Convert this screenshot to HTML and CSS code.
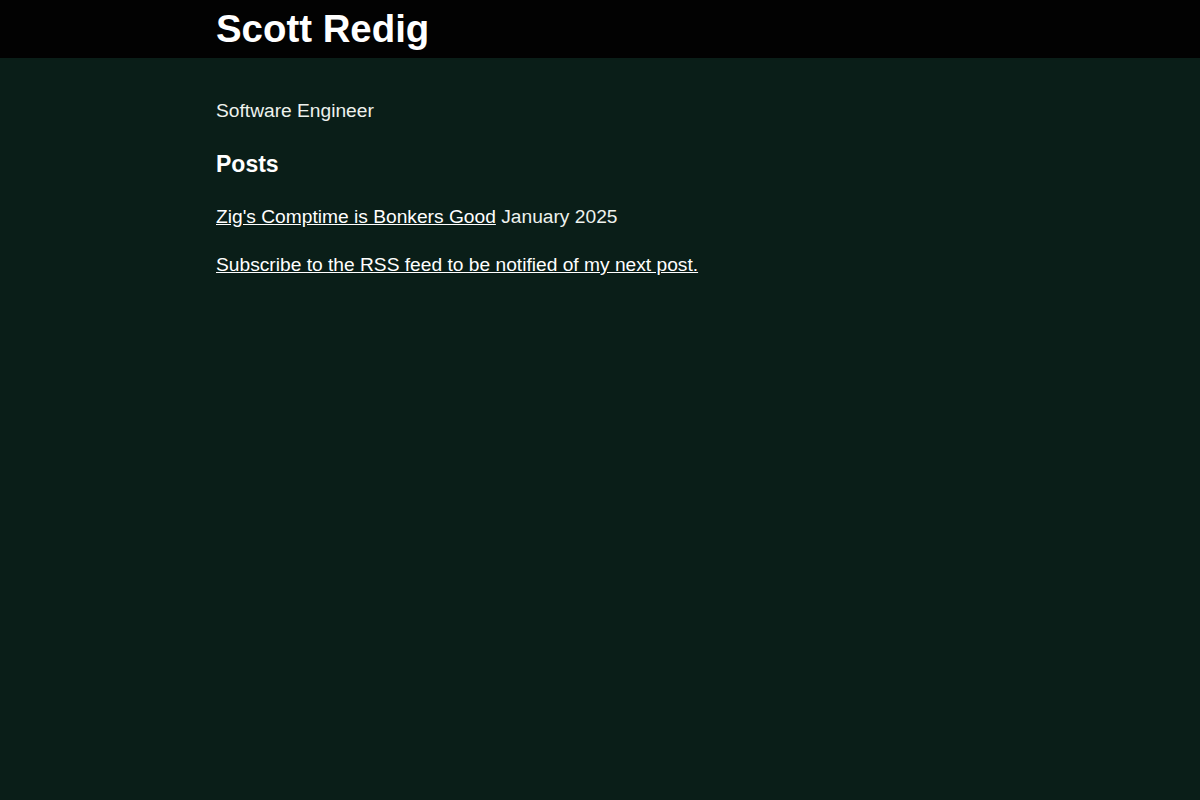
FILE: index.html
```html
<!DOCTYPE html>
<html lang="en">
<head>
	<meta charset="utf-8" />
	<meta name="viewport" content="width=device-width, initial-scale=1.0" />
	<title>Scott Redig</title>
	<link rel="stylesheet" href="styles.css">
</head>
<body>
	<header>
		<div class="wrap">
			<h1>Scott Redig</h1>
		</div>
	</header>
	<main class="wrap">
		<p>Software Engineer</p>
		<h2>Posts</h2>
		<p><a href="#">Zig's Comptime is Bonkers Good</a> January 2025</p>
		<p><a href="#">Subscribe to the RSS feed to be notified of my next post.</a></p>
	</main>
</body>
</html>
```

FILE: styles.css
```css
body {
	font: 19.2px/1.5 "Liberation Sans", Arial, sans-serif;
	color: #eef2ee;
	background: #0a1e18;
	margin: 0;
}
.wrap {
	max-width: 768px;
	margin: 0 auto;
}
header {
	background: #020202;
}
h1 {
	font-size: 2em;
	line-height: 1.5;
	margin: 0;
	color: #fff;
}
main {
	padding-top: 20px;
}
h2 {
	font-size: 23px;
	margin: 21px 0 22px;
	color: #fff;
}
p {
	margin: 1em 0;
}
a {
	color: #fff;
}
```
